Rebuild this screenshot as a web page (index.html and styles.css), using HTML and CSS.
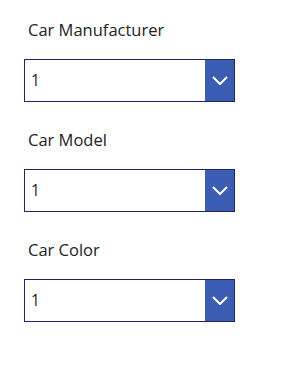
FILE: index.html
```html
<!DOCTYPE html>
<html>
<head>
<meta charset="utf-8">
<link rel="stylesheet" href="styles.css">
</head>
<body>
<div class="form">
  <div class="field">
    <div class="label">Car Manufacturer</div>
    <div class="dropdown">
      <div class="value">1</div>
      <div class="btn"><svg width="16" height="9" viewBox="0 0 16 9"><path d="M1 1 L8 8 L15 1" fill="none" stroke="#fff" stroke-width="2"/></svg></div>
    </div>
  </div>
  <div class="field">
    <div class="label">Car Model</div>
    <div class="dropdown">
      <div class="value">1</div>
      <div class="btn"><svg width="16" height="9" viewBox="0 0 16 9"><path d="M1 1 L8 8 L15 1" fill="none" stroke="#fff" stroke-width="2"/></svg></div>
    </div>
  </div>
  <div class="field">
    <div class="label">Car Color</div>
    <div class="dropdown">
      <div class="value">1</div>
      <div class="btn"><svg width="16" height="9" viewBox="0 0 16 9"><path d="M1 1 L8 8 L15 1" fill="none" stroke="#fff" stroke-width="2"/></svg></div>
    </div>
  </div>
</div>
</body>
</html>
```
FILE: styles.css
```css
html, body { margin: 0; padding: 0; background: #fff; }
body { font-family: "Open Sans", "Noto Sans", sans-serif; color: #222; }
.form { padding: 19px 0 0 24px; display: flex; flex-direction: column; gap: 27px; }
.field { display: flex; flex-direction: column; gap: 18px; }
.label { font-size: 16.5px; line-height: 22px; padding-left: 4px; color: #222; }
.dropdown { width: 211px; height: 43px; box-sizing: border-box; border: 1px solid #1f2563; display: flex; }
.value { flex: 1; font-size: 15.5px; line-height: 41px; padding-left: 6px; color: #222; }
.btn { width: 29px; background: #3c5db4; display: flex; align-items: center; justify-content: center; }
.btn svg { display: block; }
```
